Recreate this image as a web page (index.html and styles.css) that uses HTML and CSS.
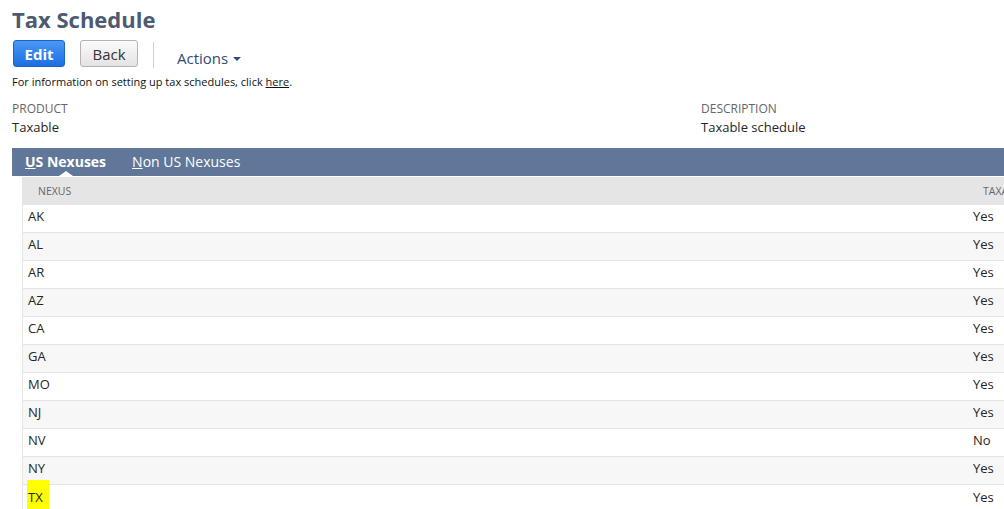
FILE: index.html
```html
<!DOCTYPE html>
<html>
<head>
<meta charset="utf-8">
<link rel="stylesheet" href="styles.css">
</head>
<body>
<div class="page">
  <h1 class="title">Tax Schedule</h1>
  <div class="toolbar">
    <button class="btn btn-primary">Edit</button>
    <button class="btn btn-secondary">Back</button>
    <span class="sep"></span>
    <span class="actions">Actions<span class="caret"></span></span>
  </div>
  <p class="info">For information on setting up tax schedules, click <a href="#">here</a>.</p>
  <div class="fields">
    <div class="field field-product">
      <div class="label">PRODUCT</div>
      <div class="value">Taxable</div>
    </div>
    <div class="field">
      <div class="label">DESCRIPTION</div>
      <div class="value">Taxable schedule</div>
    </div>
  </div>
  <div class="tabbar">
    <span class="tab active"><u>U</u>S Nexuses</span>
    <span class="tab"><u>N</u>on US Nexuses</span>
  </div>
  <div class="table">
    <div class="row head"><div class="c1">NEXUS</div><div class="c2">TAXABLE</div></div>
    <div class="row"><div class="c1">AK</div><div class="c2">Yes</div></div>
    <div class="row alt"><div class="c1">AL</div><div class="c2">Yes</div></div>
    <div class="row"><div class="c1">AR</div><div class="c2">Yes</div></div>
    <div class="row alt"><div class="c1">AZ</div><div class="c2">Yes</div></div>
    <div class="row"><div class="c1">CA</div><div class="c2">Yes</div></div>
    <div class="row alt"><div class="c1">GA</div><div class="c2">Yes</div></div>
    <div class="row"><div class="c1">MO</div><div class="c2">Yes</div></div>
    <div class="row alt"><div class="c1">NJ</div><div class="c2">Yes</div></div>
    <div class="row"><div class="c1">NV</div><div class="c2">No</div></div>
    <div class="row alt"><div class="c1">NY</div><div class="c2">Yes</div></div>
    <div class="row last"><div class="c1"><span class="hl">TX</span></div><div class="c2">Yes</div></div>
  </div>
</div>
</body>
</html>
```

FILE: styles.css
```css
html, body {
  margin: 0;
  padding: 0;
  background: #fff;
  overflow: hidden;
}
body {
  font-family: "Open Sans", "Liberation Sans", sans-serif;
  color: #262626;
}
.page {
  padding: 0 0 0 12px;
  width: 1200px;
}
.title {
  margin: 6px 0 0 0;
  font-size: 22px;
  line-height: 26px;
  font-weight: 700;
  color: #4d5a70;
}
.toolbar {
  display: flex;
  align-items: flex-start;
  margin-top: 8px;
  height: 27px;
}
.btn {
  font-family: "Open Sans", "Liberation Sans", sans-serif;
  font-size: 15px;
  height: 27px;
  line-height: 24px;
  padding: 1px 0 0 0;
  border-radius: 3px;
  cursor: pointer;
  box-sizing: border-box;
}
.btn-primary {
  margin-left: 1px;
  width: 52px;
  font-weight: 700;
  color: #fff;
  background: linear-gradient(#4a97f6, #1c6fe2);
  border: 1px solid #1d63c6;
}
.btn-secondary {
  margin-left: 15px;
  width: 58px;
  font-weight: 500;
  color: #333;
  background: linear-gradient(#fbfbfb, #e3e3e3);
  border: 1px solid #b3b3b3;
}
.sep {
  width: 1px;
  height: 26px;
  margin: 2px 0 0 15px;
  background: #cfcfcf;
}
.actions {
  margin: 7px 0 0 23px;
  font-size: 15px;
  line-height: 22px;
  color: #2f4b78;
  display: flex;
  align-items: center;
}
.caret {
  margin-left: 5px;
  width: 0;
  height: 0;
  border-left: 4px solid transparent;
  border-right: 4px solid transparent;
  border-top: 4px solid #2f4b78;
  margin-top: 2px;
}
.info {
  margin: 8px 0 0 0;
  font-size: 11px;
  line-height: 14px;
  color: #111;
}
.info a {
  color: #111;
  text-decoration: underline;
}
.fields {
  display: flex;
  margin-top: 12px;
}
.field-product {
  width: 689px;
}
.label {
  font-size: 12px;
  line-height: 16px;
  color: #666;
}
.value {
  font-size: 13px;
  line-height: 18px;
  margin-top: 1px;
  color: #262626;
}
.tabbar {
  margin-top: 12px;
  height: 28px;
  background: #607799;
  display: flex;
  align-items: stretch;
  padding-left: 13px;
  gap: 26px;
  width: 1000px;
  position: relative;
  z-index: 1;
}
.tab {
  position: relative;
  color: #fff;
  font-size: 14px;
  line-height: 28px;
}
.tab.active {
  font-weight: 700;
}
.tab.active::after {
  content: "";
  position: absolute;
  left: 50%;
  margin-left: -7px;
  bottom: 0;
  border-left: 7px solid transparent;
  border-right: 7px solid transparent;
  border-bottom: 5px solid #fff;
}
.table {
  margin: 1px 0 0 10px;
  border-left: 1px solid #e6e6e6;
  width: 1100px;
}
.row {
  display: grid;
  grid-template-columns: 945px 1fr;
  height: 28px;
  padding-bottom: 5px;
  border-bottom: 1px solid #e3e3e3;
  box-sizing: border-box;
  align-items: center;
  font-size: 13px;
  background: #fff;
}
.row.alt {
  background: #f7f7f7;
}
.row .c1 {
  padding-left: 5px;
}
.row .c2 {
  padding-left: 5px;
}
.row.head {
  background: #e5e5e5;
  border-bottom: none;
  padding-bottom: 1px;
  font-size: 10.5px;
  color: #666;
}
.row.head .c1,
.row.head .c2 {
  padding-left: 15px;
}
.row.last {
  border-bottom: none;
}
.hl {
  background: #ffff00;
  display: inline-block;
  width: 21px;
  margin-left: -1px;
  padding: 8px 0 9px 1px;
  margin-top: -8px;
  margin-bottom: -9px;
  line-height: 18px;
}
```
